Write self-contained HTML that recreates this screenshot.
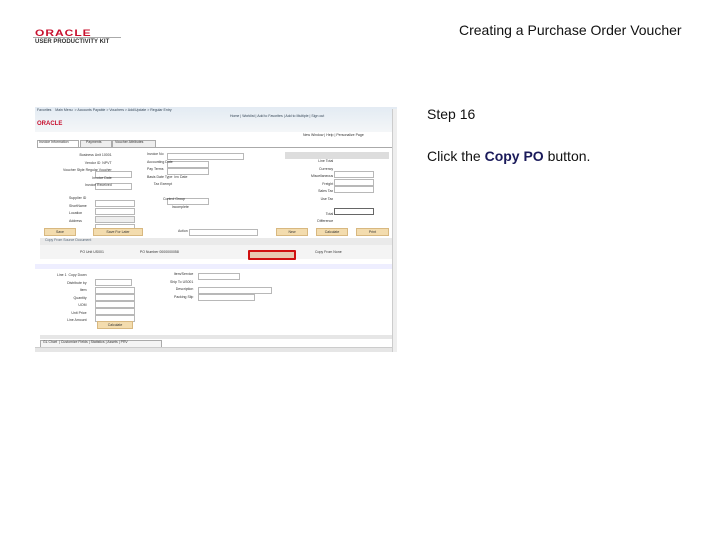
<!DOCTYPE html>
<html><head><meta charset="utf-8"><style>
body{margin:0;width:720px;height:540px;background:#fff;position:relative;overflow:hidden;font-family:"Liberation Sans",sans-serif}
.a{position:absolute}
.t{position:absolute;font-size:3.5px;color:#333;white-space:nowrap;line-height:7.5px}
.i{position:absolute;height:5px;border:1px solid #b8b8b8;background:#fff}
.b{position:absolute;height:6px;background:#f3dcae;border:1px solid #d8b880;font-size:3.5px;text-align:center;color:#333;line-height:6px}
</style></head><body>
<div class="a" style="left:35px;top:26px;font-size:12px;font-weight:bold;color:#c8102e;letter-spacing:1px;transform:scaleY(0.8)">ORACLE</div>
<div class="a" style="left:33px;top:37px;width:88px;height:1px;background:#aaa"></div>
<div class="a" style="left:35px;top:39px;font-size:6px;font-weight:bold;color:#333">USER PRODUCTIVITY KIT</div>
<div class="a" style="left:459px;top:22px;font-size:14px;color:#111">Creating a Purchase Order Voucher</div>
<div class="a" style="left:427px;top:106px;font-size:14px;color:#111">Step 16</div>
<div class="a" style="left:427px;top:148px;font-size:14px;color:#111">Click the <b style="color:#1a1a5a">Copy PO</b> button.</div>

<div class="a" style="left:35px;top:107px;width:362px;height:245px;background:#fff;overflow:hidden">
 <div class="a" style="left:0;top:0;width:362px;height:25px;background:linear-gradient(#e3ebf3,#f4f6f8)"></div>
 <div class="t" style="left:2px;top:0px;color:#345">Favorites &nbsp;&nbsp; Main Menu &nbsp;&gt; Accounts Payable &gt; Vouchers &gt; Add/Update &gt; Regular Entry</div>
 <div class="t" style="left:195px;top:6px;color:#345">Home | Worklist | Add to Favorites | Add to Multiple | Sign out</div>
 <div class="a" style="left:2px;top:14px;font-size:6px;font-weight:bold;color:#c8102e">ORACLE</div>
 <div class="t" style="left:268px;top:25px">New Window | Help | Personalize Page</div>
 <div class="a" style="left:357px;top:2px;width:5px;height:243px;background:#eee;border-left:1px solid #ccc"></div>
 <div class="a" style="left:2px;top:33px;width:40px;height:6px;border:1px solid #aaa;background:#fff"></div>
 <div class="t" style="left:4px;top:32px">Invoice Information</div>
 <div class="a" style="left:45px;top:33px;width:30px;height:6px;border:1px solid #aaa;background:#eee"></div>
 <div class="t" style="left:51px;top:32px">Payments</div>
 <div class="a" style="left:77px;top:33px;width:42px;height:6px;border:1px solid #aaa;background:#eee"></div>
 <div class="t" style="left:80px;top:32px">Voucher Attributes</div>
 <div class="a" style="left:2px;top:40px;width:355px;height:1px;background:#aaa"></div>
 <div class="i" style="left:60px;top:64px;width:35px"></div>
 <div class="i" style="left:60px;top:76px;width:35px"></div>
 <div class="i" style="left:60px;top:93px;width:38px"></div>
 <div class="i" style="left:60px;top:101px;width:38px"></div>
 <div class="i" style="left:60px;top:109px;width:38px;background:#eee"></div>
 <div class="i" style="left:60px;top:117px;width:38px"></div>
 <div class="i" style="left:132px;top:46px;width:75px"></div>
 <div class="i" style="left:132px;top:54px;width:40px"></div>
 <div class="i" style="left:132px;top:61px;width:40px"></div>
 <div class="i" style="left:132px;top:91px;width:40px"></div>
 <div class="a" style="left:250px;top:45px;width:104px;height:7px;background:#ddd"></div>
 <div class="i" style="left:299px;top:64px;width:38px"></div>
 <div class="i" style="left:299px;top:72px;width:38px"></div>
 <div class="i" style="left:299px;top:79px;width:38px"></div>
 <div class="i" style="left:299px;top:101px;width:38px;border-color:#666"></div>
 <div class="t" style="left:28px;top:45px;text-align:right">Business Unit 10001<br>Vendor ID &nbsp;NPVT<br>Voucher Style Regular Voucher<br>Invoice Date<br>Invoice Received</div>
 <div class="t" style="left:34px;top:88px">Supplier ID<br>ShortName<br>Location<br>Address</div>
 <div class="t" style="left:112px;top:44px">Invoice No<br>Accounting Date<br>Pay Terms<br>Basis Date Type &nbsp;Inv Date<br>&nbsp;&nbsp;&nbsp;&nbsp;&nbsp;&nbsp;&nbsp;Tax Exempt</div>
 <div class="t" style="left:128px;top:89px">Control Group<br>&nbsp;&nbsp;&nbsp;&nbsp;&nbsp;&nbsp;&nbsp;&nbsp;&nbsp;Incomplete</div>
 <div class="t" style="left:276px;top:51px;text-align:right">Line Total<br>Currency<br>Miscellaneous<br>Freight<br>Sales Tax<br>Use Tax<br><br>Total<br>Difference</div>
 <div class="b" style="left:9px;top:121px;width:30px">Save</div>
 <div class="b" style="left:58px;top:121px;width:48px">Save For Later</div>
 <div class="t" style="left:143px;top:121px">Action</div>
 <div class="i" style="left:154px;top:122px;width:67px"></div>
 <div class="b" style="left:241px;top:121px;width:30px">New</div>
 <div class="b" style="left:281px;top:121px;width:30px">Calculate</div>
 <div class="b" style="left:321px;top:121px;width:31px">Print</div>
 <div class="a" style="left:5px;top:131px;width:352px;height:7px;background:#eaeaea"></div>
 <div class="t" style="left:10px;top:130px;color:#567">Copy From Source Document</div>
 <div class="a" style="left:5px;top:138px;width:352px;height:14px;background:#f4f4f4"></div>
 <div class="t" style="left:45px;top:142px">PO Unit US001 &nbsp;&nbsp;&nbsp;&nbsp;&nbsp;&nbsp;&nbsp;&nbsp;&nbsp;&nbsp;&nbsp;&nbsp;&nbsp;&nbsp;&nbsp;&nbsp;&nbsp;&nbsp;&nbsp;&nbsp;&nbsp;&nbsp;&nbsp;&nbsp;&nbsp;&nbsp;&nbsp;&nbsp;&nbsp;&nbsp;&nbsp;&nbsp;&nbsp;&nbsp;&nbsp;&nbsp;PO Number 0000000058</div>
 <div class="t" style="left:280px;top:142px">Copy From None</div>
 <div class="a" style="left:213px;top:143px;width:44px;height:6px;background:#e8c8b0;border:2px solid #d01010;border-radius:1px"></div>
 <div class="a" style="left:0;top:157px;width:357px;height:5px;background:#eef"></div>
 <div class="i" style="left:60px;top:172px;width:35px"></div>
 <div class="i" style="left:60px;top:180px;width:38px"></div>
 <div class="i" style="left:60px;top:187px;width:38px"></div>
 <div class="i" style="left:60px;top:194px;width:38px"></div>
 <div class="i" style="left:60px;top:201px;width:38px"></div>
 <div class="i" style="left:60px;top:208px;width:38px"></div>
 <div class="t" style="left:22px;top:165px;text-align:right">Line 1 &nbsp;Copy Down<br>Distribute by<br>Item<br>Quantity<br>UOM<br>Unit Price<br>Line Amount</div>
 <div class="b" style="left:62px;top:214px;width:34px">Calculate</div>
 <div class="t" style="left:135px;top:164px;text-align:right">Item/Service<br>Ship To US001<br>Description<br>Packing Slip</div>
 <div class="i" style="left:163px;top:166px;width:40px"></div>
 <div class="i" style="left:163px;top:180px;width:72px"></div>
 <div class="i" style="left:163px;top:187px;width:55px"></div>
 <div class="a" style="left:5px;top:228px;width:352px;height:4px;background:#e6e6e6"></div>
 <div class="a" style="left:5px;top:233px;width:120px;height:7px;border:1px solid #aaa;background:#f4f4f4"></div>
 <div class="t" style="left:8px;top:232px">GL Chart &nbsp;| Customize Fields | Statistics | Assets | PRV</div>
 <div class="a" style="left:0;top:240px;width:357px;height:5px;background:#e6e6e6;border-top:1px solid #ccc"></div>
</div>
</body></html>
